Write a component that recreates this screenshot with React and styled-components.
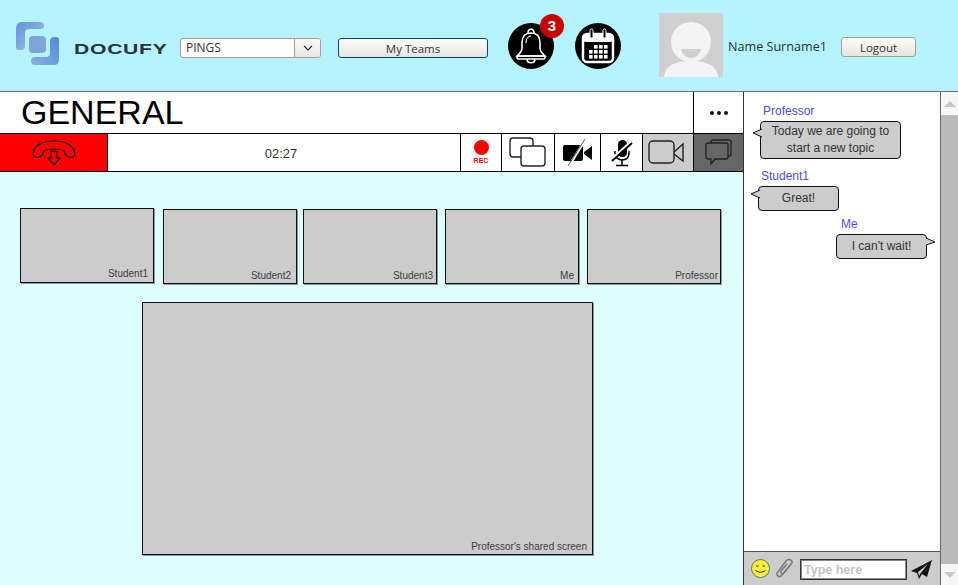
import React from 'react'
import styled, { createGlobalStyle } from 'styled-components'

const Global = createGlobalStyle`
  html, body { margin: 0; padding: 0; height: 100%; overflow: hidden; }
  body { font-family: "Liberation Sans", Arial, sans-serif; background: #dfffff; }
`

const Page = styled.div`
  width: 958px;
  height: 585px;
  display: flex;
  flex-direction: column;
  overflow: hidden;
`

const Header = styled.header`
  height: 92px;
  flex: none;
  box-sizing: border-box;
  background: #b5f3ff;
  display: flex;
  align-items: center;
  padding-left: 14px;
  border-bottom: 1px solid #5f7378;
`

const Wordmark = styled.span`
  width: 92px;
  margin-left: 12px;
  margin-top: 5px;
  font-size: 15px;
  line-height: 15px;
  font-weight: 700;
  letter-spacing: 0.5px;
  color: #2c3438;
  transform: scaleX(1.41);
  transform-origin: left center;
`

const Select = styled.div`
  width: 141px;
  height: 20px;
  margin-left: 14px;
  margin-top: 5px;
  box-sizing: border-box;
  border: 1px solid #a89d8e;
  border-radius: 3px;
  background: #fff;
  display: flex;
  overflow: hidden;
  font-family: "Open Sans", sans-serif;
  font-size: 12px;
  color: #333;
`

const SelectValue = styled.div`
  flex: 1;
  line-height: 18px;
  padding-left: 5px;
`

const SelectArrow = styled.div`
  width: 25px;
  border-left: 1px solid #a89d8e;
  background: linear-gradient(#fbfaf8, #e9e6df);
  display: flex;
  align-items: center;
  justify-content: center;
`

const HeaderButton = styled.button`
  width: ${p => p.$w}px;
  height: 20px;
  margin-left: ${p => p.$ml}px;
  margin-top: ${p => p.$mt}px;
  padding: 0;
  box-sizing: border-box;
  border: 1px solid ${p => p.$border};
  border-radius: 3px;
  background: linear-gradient(#fdfdfc, #e6e4de);
  font-family: "Open Sans", sans-serif;
  font-size: 11.5px;
  color: #333;
`

const RoundIcon = styled.div`
  position: relative;
  width: 46px;
  height: 46px;
  margin-left: ${p => p.$ml}px;
  border-radius: 50%;
  background: #000;
  display: flex;
  align-items: center;
  justify-content: center;
`

const Badge = styled.span`
  position: absolute;
  top: -9px;
  left: 32px;
  width: 24px;
  height: 24px;
  border-radius: 50%;
  background: #c80000;
  color: #fff;
  font-size: 15px;
  font-weight: 700;
  line-height: 24px;
  text-align: center;
`

const Avatar = styled.div`
  width: 64px;
  height: 64px;
  margin-left: 38px;
  margin-top: -1px;
  background: #d0d0d0;
  flex: none;
`

const UserName = styled.span`
  margin-left: 5px;
  margin-top: 1px;
  font-family: "Open Sans", sans-serif;
  font-size: 12.6px;
  color: #243238;
  width: 113px;
  white-space: nowrap;
`

const Body = styled.div`
  flex: 1;
  display: flex;
  min-height: 0;
`

const Main = styled.main`
  width: 743px;
  flex: none;
  display: flex;
  flex-direction: column;
`

const TitleRow = styled.div`
  height: 41px;
  flex: none;
  background: #fff;
  display: flex;
`

const Title = styled.h1`
  flex: 1;
  margin: 0;
  padding-left: 21px;
  font-size: 34px;
  font-weight: 400;
  line-height: 41px;
  color: #000;
`

const MoreCell = styled.div`
  width: 49px;
  border-left: 1px solid #000;
  display: flex;
  align-items: center;
  justify-content: center;
  gap: 3px;
`

const Dot = styled.span`
  width: 4px;
  height: 4px;
  border-radius: 50%;
  background: #111;
`

const Toolbar = styled.div`
  height: 39px;
  flex: none;
  box-sizing: border-box;
  display: flex;
  background: #fff;
  border-top: 1px solid #000;
  border-bottom: 1px solid #000;
`

const ToolCell = styled.div`
  width: ${p => p.$w}px;
  flex: ${p => (p.$w ? 'none' : 1)};
  box-sizing: border-box;
  background: ${p => p.$bg || '#fff'};
  border-left: ${p => (p.$first ? 'none' : '1px solid #000')};
  display: flex;
  flex-direction: column;
  align-items: center;
  justify-content: center;
  padding-right: ${p => p.$pr || 0}px;
`

const Timer = styled.span`
  margin: 1px 6px 0 0;
  font-size: 13px;
  color: #333;
`

const RecDot = styled.span`
  width: 15px;
  height: 15px;
  border-radius: 50%;
  background: #ff0000;
`

const RecLabel = styled.span`
  font-size: 7px;
  line-height: 8px;
  margin-top: 2px;
  font-weight: 700;
  color: #ff0000;
`

const Stage = styled.div`
  flex: 1;
  background: #dfffff;
  display: flex;
  flex-direction: column;
  align-items: flex-start;
`

const ThumbRow = styled.div`
  display: flex;
  align-items: flex-start;
  padding: 36px 0 0 20px;
`

const VideoTile = styled.div`
  box-sizing: border-box;
  width: ${p => p.$w}px;
  height: ${p => p.$h}px;
  margin-left: ${p => p.$ml || 0}px;
  margin-top: ${p => p.$mt || 0}px;
  background: #cccccc;
  border: 1px solid #111;
  box-shadow: 1px 1px 0 #8a9a9a;
  display: flex;
  align-items: flex-end;
  justify-content: flex-end;
  padding: 0 ${p => p.$pr}px ${p => p.$pb}px 0;
  font-size: 10px;
  line-height: 11px;
  color: #3c3c3c;
`

const Chat = styled.aside`
  width: 198px;
  flex: none;
  box-sizing: border-box;
  background: #fff;
  border-left: 1px solid #333;
  border-right: 1px solid #666;
  display: flex;
  flex-direction: column;
`

const Messages = styled.div`
  flex: 1;
  display: flex;
  flex-direction: column;
  align-items: flex-start;
  padding-top: 12px;
`

const Message = styled.div`
  margin-left: ${p => p.$ml}px;
  margin-bottom: ${p => p.$mb}px;
`

const Sender = styled.div`
  margin-left: ${p => p.$ml}px;
  font-size: 12px;
  line-height: 14px;
  margin-bottom: 3px;
  color: #4d4dff;
`

const Bubble = styled.div`
  position: relative;
  width: ${p => p.$w}px;
  box-sizing: border-box;
  background: #cccccc;
  border: 1px solid #111;
  border-radius: 4px;
  padding: ${p => p.$py}px 4px;
  text-align: center;
  font-size: 12px;
  line-height: 17px;
  color: #333;
`

const Tail = styled.svg`
  position: absolute;
  top: ${p => p.$top}px;
  ${p => (p.$right ? 'right: -10px;' : 'left: -9px;')}
  width: 10px;
  height: 10px;
`

const InputBar = styled.div`
  height: 34px;
  flex: none;
  box-sizing: border-box;
  border-top: 1px solid #555;
  background: #cccccc;
  display: flex;
  align-items: center;
  padding-left: 7px;
`

const MessageInput = styled.input`
  width: 107px;
  height: 21px;
  box-sizing: border-box;
  margin: 2px 4px 0 6px;
  border: 1px solid #333;
  outline: 1px solid #888;
  outline-offset: -2px;
  background: #fff;
  padding: 0 3px;
  font-family: "Liberation Sans", sans-serif;
  font-size: 12.5px;
  font-weight: 700;
  &::placeholder { color: #c4c4c4; opacity: 1; }
`

const Scrollbar = styled.div`
  width: 17px;
  flex: none;
  background: #bbbbbb;
  display: flex;
  flex-direction: column;
  justify-content: space-between;
`

const ScrollButton = styled.div`
  height: ${p => p.$h}px;
  background: #f6f6f6;
  display: flex;
  align-items: center;
  justify-content: center;
`

const Arrow = styled.span`
  width: 0;
  height: 0;
  border-left: 6px solid transparent;
  border-right: 6px solid transparent;
  ${p => (p.$down ? 'border-top: 6px solid #c8c8c8;' : 'border-bottom: 6px solid #c8c8c8;')}
`

const Logo = () => (
  <svg width="47" height="47" viewBox="0 0 47 47" style={{ flex: 'none', marginLeft: 1 }}>
    <defs>
      <linearGradient id="lg" x1="0" y1="0" x2="1" y2="1">
        <stop offset="0" stopColor="#5f95dc" />
        <stop offset="1" stopColor="#a9bfd9" />
      </linearGradient>
      <linearGradient id="lg2" x1="1" y1="0" x2="0" y2="1">
        <stop offset="0" stopColor="#4f8ade" />
        <stop offset="1" stopColor="#8fb0dc" />
      </linearGradient>
    </defs>
    <path d="M7 0 H25 Q29 0 29 4 Q29 7 25 7 H14 Q10 7 10 11 V24 Q10 28 6 28 H4 Q1 28 1 25 V7 Q1 0 7 0 Z" fill="url(#lg)" />
    <path d="M39 43 H20 Q16 43 16 39 Q16 35 20 35 H31 Q35 35 35 31 V19 Q35 15 39 15 H41 Q44 15 44 18 V37 Q44 43 39 43 Z" fill="url(#lg2)" />
    <rect x="14" y="14" width="17" height="17" rx="4" fill="#7ea4d8" />
  </svg>
)

const BellIcon = () => (
  <svg width="32" height="36" viewBox="0 0 32 36" fill="none" stroke="#fff" strokeWidth="1.6">
    <path d="M16 5 C9 5 7 10 7 15 V20 C7 24 4 26 2 28 H30 C28 26 25 24 25 20 V15 C25 10 23 5 16 5 Z" />
    <path d="M13 5 C13 0 19 0 19 5" />
    <path d="M11 15 C11 11 13 8 16 8" strokeWidth="1.2" />
    <path d="M12 31 C12 36 20 36 20 31" />
    <rect x="2" y="28" width="28" height="3" rx="1.5" />
  </svg>
)

const CalendarIcon = () => (
  <svg width="34" height="36" viewBox="0 0 34 36">
    <rect x="2" y="6" width="30" height="28" rx="4" fill="none" stroke="#fff" strokeWidth="2.5" />
    <rect x="2" y="6" width="30" height="8" rx="3" fill="#fff" />
    <rect x="9" y="1" width="3" height="9" rx="1.5" fill="#000" stroke="#fff" strokeWidth="1" />
    <rect x="22" y="1" width="3" height="9" rx="1.5" fill="#000" stroke="#fff" strokeWidth="1" />
    {[0, 1, 2, 3].map(c =>
      [0, 1, 2].map(r => (
        (r > 0 || c > 0) && <rect key={c + '-' + r} x={8 + c * 5} y={17 + r * 5} width="3.6" height="3.6" fill="#fff" />
      ))
    )}
  </svg>
)

const AvatarArt = () => (
  <svg width="64" height="64" viewBox="0 0 64 64" style={{ display: 'block' }}>
    <path d="M5 64 C6 52 17 48 32 48 C47 48 58 52 59 64 Z" fill="#f4f4f4" />
    <circle cx="32" cy="29" r="20" fill="#f4f4f4" />
    <path d="M22 36 H42 C41 42 36 45 32 45 C28 45 23 42 22 36 Z" fill="#cfcfcf" />
  </svg>
)

const HangupIcon = () => (
  <svg width="46" height="26" viewBox="0 0 46 26" fill="none" stroke="#111" strokeWidth="1.2">
    <path d="M2 14 C3 5 12 1 23 1 C34 1 43 5 44 14 C44 17 41 18 38 17 C35 16 34 15 34 13 C34 10 30 9 23 9 C16 9 12 10 12 13 C12 15 11 16 8 17 C5 18 2 17 2 14 Z" />
    <path d="M20 11 H26 V18 H29 L23 25 L17 18 H20 Z" />
  </svg>
)

const ScreensIcon = () => (
  <svg width="38" height="31" viewBox="0 0 38 31" fill="none" stroke="#222" strokeWidth="1.4">
    <rect x="1" y="1" width="23" height="19" rx="3" />
    <rect x="12" y="9" width="24" height="20" rx="3" fill="#fff" />
  </svg>
)

const VideoOffIcon = () => (
  <svg width="30" height="28" viewBox="0 0 30 28">
    <rect x="0" y="6" width="20" height="16" rx="2" fill="#000" />
    <path d="M21 13 L29 7 V21 L21 15 Z" fill="#000" />
    <path d="M6 27 L22 1" stroke="#fff" strokeWidth="2.4" />
    <path d="M5 27 L22 0" stroke="#333" strokeWidth="0.8" />
  </svg>
)

const MicOffIcon = () => (
  <svg width="22" height="28" viewBox="0 0 22 28" fill="none">
    <rect x="7" y="1" width="9" height="17" rx="4.5" fill="#000" />
    <path d="M4 12 V14 C4 19 8 21 11 21 C15 21 18 19 18 14 V12" stroke="#000" strokeWidth="1.5" />
    <path d="M11 21 V26 M5 26.5 H17" stroke="#000" strokeWidth="1.5" />
    <path d="M1 20 L20 3" stroke="#fff" strokeWidth="3" />
    <path d="M1 22 L21 4" stroke="#000" strokeWidth="1.8" />
  </svg>
)

const VideoIcon = () => (
  <svg width="37" height="25" viewBox="0 0 37 25" fill="none" stroke="#222" strokeWidth="1.4">
    <rect x="1" y="1" width="25" height="22" rx="4" />
    <path d="M26 12 L35 4 V21 L26 14" />
  </svg>
)

const ChatIcon = () => (
  <svg width="29" height="28" viewBox="0 0 29 28" fill="none" stroke="#222" strokeWidth="1.3">
    <path d="M7 4 V3 Q7 1 9 1 H25 Q27 1 27 3 V15 Q27 17 25 17 H24" />
    <path d="M5 4 H22 Q24 4 24 6 V18 Q24 20 22 20 H11 L7 25 V20 H5 Q2 20 2 18 V6 Q2 4 5 4 Z" />
  </svg>
)

const Smiley = () => (
  <svg width="19" height="19" viewBox="0 0 19 19">
    <circle cx="9.5" cy="9.5" r="9" fill="#f4f03c" stroke="#555" strokeWidth="0.8" />
    <path d="M5 7 H7.5 M11.5 7 H14" stroke="#333" strokeWidth="1" />
    <path d="M4.5 11.5 Q9.5 15 14.5 11.5" stroke="#333" strokeWidth="1" fill="none" />
  </svg>
)

const Clip = () => (
  <svg width="19" height="21" viewBox="0 0 19 21" fill="none" stroke="#777" strokeWidth="1.4" style={{ marginLeft: 5 }}>
    <path d="M16 6 L7 17 C5 20 1 18 2 15 L11 3 C13 0 18 2 17 5 L9 15 C8 17 5 15 6 13 L12 6" />
  </svg>
)

const SendIcon = () => (
  <svg width="21" height="19" viewBox="0 0 21 19" style={{ marginTop: 2 }}>
    <path d="M21 0 L0 11 L6 13 L8 19 L11 14 L16 17 Z M7 12 L17 4 L9 14 L8 16 Z" fill="#111" fillRule="evenodd" />
  </svg>
)

const BubbleTail = ({ top, right }) => (
  <Tail $top={top} $right={right} viewBox="0 0 10 10">
    {right
      ? <path d="M0 1 L9 5 L0 8" fill="#cccccc" stroke="#111" strokeWidth="1" />
      : <path d="M10 1 L1 5 L10 9" fill="#cccccc" stroke="#111" strokeWidth="1" />}
  </Tail>
)

const students = [
  { name: 'Student1', ml: 0, mt: 0, pr: 5, pb: 3 },
  { name: 'Student2', ml: 9, mt: 1, pr: 5, pb: 2 },
  { name: 'Student3', ml: 6, mt: 1, pr: 3, pb: 2 },
  { name: 'Me', ml: 8, mt: 1, pr: 4, pb: 2 },
  { name: 'Professor', ml: 8, mt: 1, pr: 2, pb: 2 },
]

export default function App() {
  return (
    <Page>
      <Global />
      <Header>
        <Logo />
        <Wordmark>DOCUFY</Wordmark>
        <Select>
          <SelectValue>PINGS</SelectValue>
          <SelectArrow>
            <svg width="10" height="6" viewBox="0 0 10 6" fill="none" stroke="#333" strokeWidth="1.2">
              <path d="M1 1 L5 5 L9 1" />
            </svg>
          </SelectArrow>
        </Select>
        <HeaderButton $w={150} $ml={17} $mt={5} $border="#0b4379">My Teams</HeaderButton>
        <RoundIcon $ml={20}>
          <BellIcon />
          <Badge>3</Badge>
        </RoundIcon>
        <RoundIcon $ml={21}>
          <CalendarIcon />
        </RoundIcon>
        <Avatar><AvatarArt /></Avatar>
        <UserName>Name Surname1</UserName>
        <HeaderButton $w={75} $ml={0} $mt={3} $border="#a89d8e">Logout</HeaderButton>
      </Header>
      <Body>
        <Main>
          <TitleRow>
            <Title>GENERAL</Title>
            <MoreCell><Dot /><Dot /><Dot /></MoreCell>
          </TitleRow>
          <Toolbar>
            <ToolCell $w={107} $bg="#ff0000" $first><HangupIcon /></ToolCell>
            <ToolCell><Timer>02:27</Timer></ToolCell>
            <ToolCell $w={41}><RecDot /><RecLabel>REC</RecLabel></ToolCell>
            <ToolCell $w={53}><ScreensIcon /></ToolCell>
            <ToolCell $w={46}><VideoOffIcon /></ToolCell>
            <ToolCell $w={42}><MicOffIcon /></ToolCell>
            <ToolCell $w={51} $bg="#cccccc" $pr={3}><VideoIcon /></ToolCell>
            <ToolCell $w={50} $bg="#666666"><ChatIcon /></ToolCell>
          </Toolbar>
          <Stage>
            <ThumbRow>
              {students.map(s => (
                <VideoTile key={s.name} $w={134} $h={75} $ml={s.ml} $mt={s.mt} $pr={s.pr} $pb={s.pb}>
                  {s.name}
                </VideoTile>
              ))}
            </ThumbRow>
            <VideoTile $w={451} $h={253} $ml={142} $mt={18} $pr={5} $pb={2}>
              Professor's shared screen
            </VideoTile>
          </Stage>
        </Main>
        <Chat>
          <Messages>
            <Message $ml={16} $mb={10}>
              <Sender $ml={3}>Professor</Sender>
              <Bubble $w={141} $py={1}>
                <BubbleTail top={6} />
                Today we are going to start a new topic
              </Bubble>
            </Message>
            <Message $ml={14} $mb={6}>
              <Sender $ml={3}>Student1</Sender>
              <Bubble $w={81} $py={3}>
                <BubbleTail top={2} />
                Great!
              </Bubble>
            </Message>
            <Message $ml={92} $mb={0}>
              <Sender $ml={5}>Me</Sender>
              <Bubble $w={91} $py={3}>
                <BubbleTail top={2} right />
                I can't wait!
              </Bubble>
            </Message>
          </Messages>
          <InputBar>
            <Smiley />
            <Clip />
            <MessageInput placeholder="Type here" readOnly />
            <SendIcon />
          </InputBar>
        </Chat>
        <Scrollbar>
          <ScrollButton $h={23}><Arrow /></ScrollButton>
          <ScrollButton $h={21}><Arrow $down /></ScrollButton>
        </Scrollbar>
      </Body>
    </Page>
  )
}
